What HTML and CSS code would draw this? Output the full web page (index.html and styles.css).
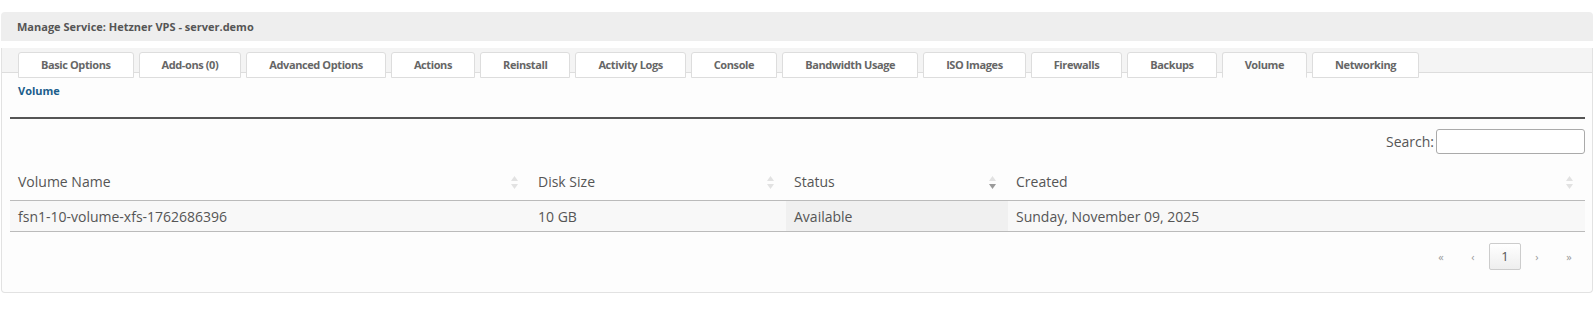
FILE: index.html
```html
<!DOCTYPE html>
<html lang="en">
<head>
    <meta charset="UTF-8">
    <meta name="viewport" content="width=device-width, initial-scale=1.0">
    <title>Manage Service: Hetzner VPS - server.demo</title>
    <link rel="stylesheet" href="styles.css">
</head>
<body>

<div class="page-title">Manage Service: Hetzner VPS - server.demo</div>

<div class="panel">
    <ul class="tabs">
        <li class="tab">Basic Options</li>
        <li class="tab">Add-ons (0)</li>
        <li class="tab">Advanced Options</li>
        <li class="tab">Actions</li>
        <li class="tab">Reinstall</li>
        <li class="tab">Activity Logs</li>
        <li class="tab">Console</li>
        <li class="tab">Bandwidth Usage</li>
        <li class="tab">ISO Images</li>
        <li class="tab">Firewalls</li>
        <li class="tab">Backups</li>
        <li class="tab active">Volume</li>
        <li class="tab">Networking</li>
    </ul>

    <div class="tab-body">
        <a class="section-link" href="#">Volume</a>
        <div class="section-rule"></div>

        <div class="table-tools">
            <label for="search">Search:</label>
            <input type="search" id="search">
        </div>

        <table class="data-table">
            <colgroup>
                <col style="width: 520px">
                <col style="width: 256px">
                <col style="width: 222px">
                <col>
            </colgroup>
            <thead>
                <tr>
                    <th>Volume Name<span class="sort"><svg width="7" height="13" viewBox="0 0 7 13"><path d="M3.5 0L7 5H0z" fill="#e2e2e2"/><path d="M3.5 13L7 8H0z" fill="#e2e2e2"/></svg></span></th>
                    <th>Disk Size<span class="sort"><svg width="7" height="13" viewBox="0 0 7 13"><path d="M3.5 0L7 5H0z" fill="#e2e2e2"/><path d="M3.5 13L7 8H0z" fill="#e2e2e2"/></svg></span></th>
                    <th>Status<span class="sort"><svg width="7" height="13" viewBox="0 0 7 13"><path d="M3.5 0L7 5H0z" fill="#e2e2e2"/><path d="M3.5 13L7 8H0z" fill="#9a9a9a"/></svg></span></th>
                    <th>Created<span class="sort"><svg width="7" height="13" viewBox="0 0 7 13"><path d="M3.5 0L7 5H0z" fill="#e2e2e2"/><path d="M3.5 13L7 8H0z" fill="#e2e2e2"/></svg></span></th>
                </tr>
            </thead>
            <tbody>
                <tr>
                    <td>fsn1-10-volume-xfs-1762686396</td>
                    <td>10 GB</td>
                    <td class="sorted">Available</td>
                    <td>Sunday, November 09, 2025</td>
                </tr>
            </tbody>
        </table>

        <div class="pager">
            <span class="page-btn">&laquo;</span>
            <span class="page-btn">&lsaquo;</span>
            <span class="page-btn current">1</span>
            <span class="page-btn">&rsaquo;</span>
            <span class="page-btn">&raquo;</span>
        </div>
    </div>
</div>

</body>
</html>
```

FILE: styles.css
```css
body {
    font-family: "Open Sans", Arial, sans-serif;
    margin: 12px 3px 0 1px;
    background-color: #ffffff;
    color: #555555;
}
.page-title {
    height: 29px;
    line-height: 29px;
    padding: 0 16px;
    background-color: #eeeeee;
    border-radius: 4px 4px 0 0;
    font-size: 11px;
    font-weight: bold;
    color: #555555;
}
.panel {
    margin-top: 7px;
    border: 1px solid #e2e2e2;
    border-top: none;
    border-radius: 0 0 4px 4px;
    background-color: #fdfdfd;
}
.tabs {
    display: flex;
    align-items: flex-start;
    gap: 5px;
    height: 20px;
    margin: 0;
    padding: 4px 0 0 16px;
    list-style: none;
    background-color: #f4f4f4;
    border-bottom: 1px solid #dddddd;
}
.tab {
    height: 26px;
    line-height: 24px;
    padding: 0 22px;
    background-color: #ffffff;
    border: 1px solid #dddddd;
    border-radius: 3px 3px 0 0;
    box-sizing: border-box;
    font-size: 11px;
    font-weight: bold;
    letter-spacing: -0.4px;
    color: #666666;
    white-space: nowrap;
}
.tab.active {
    border-bottom-color: #fdfdfd;
    background-color: #fdfdfd;
}
.tab-body {
    padding: 10px 7px 22px 8px;
}
.section-link {
    display: block;
    padding-left: 8px;
    font-size: 11px;
    font-weight: bold;
    color: #1b5e8c;
    text-decoration: none;
    line-height: 16px;
}
.section-rule {
    margin-top: 18px;
    border-top: 2px solid #555555;
}
.table-tools {
    display: flex;
    justify-content: flex-end;
    align-items: center;
    gap: 2px;
    margin-top: 10px;
    font-size: 14px;
    color: #555555;
}
.table-tools input {
    width: 149px;
    height: 25px;
    box-sizing: border-box;
    border: 1px solid #aaaaaa;
    border-radius: 3px;
    background-color: #ffffff;
    margin: 0;
}
.data-table {
    width: 100%;
    table-layout: fixed;
    border-collapse: collapse;
    margin-top: 9px;
    font-size: 14px;
    color: #555555;
}
.data-table th {
    position: relative;
    text-align: left;
    font-weight: normal;
    padding: 9px 8px;
    border-bottom: 1px solid #bbbbbb;
}
.sort {
    position: absolute;
    right: 12px;
    top: 13px;
    line-height: 0;
}
.data-table td {
    padding: 6px 8px 5px;
    background-color: #f8f8f8;
    border-bottom: 1px solid #bbbbbb;
}
.data-table td.sorted {
    background-color: #f0f0f0;
}
.pager {
    display: flex;
    justify-content: flex-end;
    margin-top: 11px;
}
.page-btn {
    width: 32px;
    height: 27px;
    line-height: 25px;
    text-align: center;
    font-size: 11px;
    color: #999999;
    box-sizing: border-box;
    border: 1px solid transparent;
}
.page-btn.current {
    font-size: 13px;
    color: #555555;
    border: 1px solid #cccccc;
    border-radius: 2px;
    background: linear-gradient(#ffffff, #eeeeee);
}
```
